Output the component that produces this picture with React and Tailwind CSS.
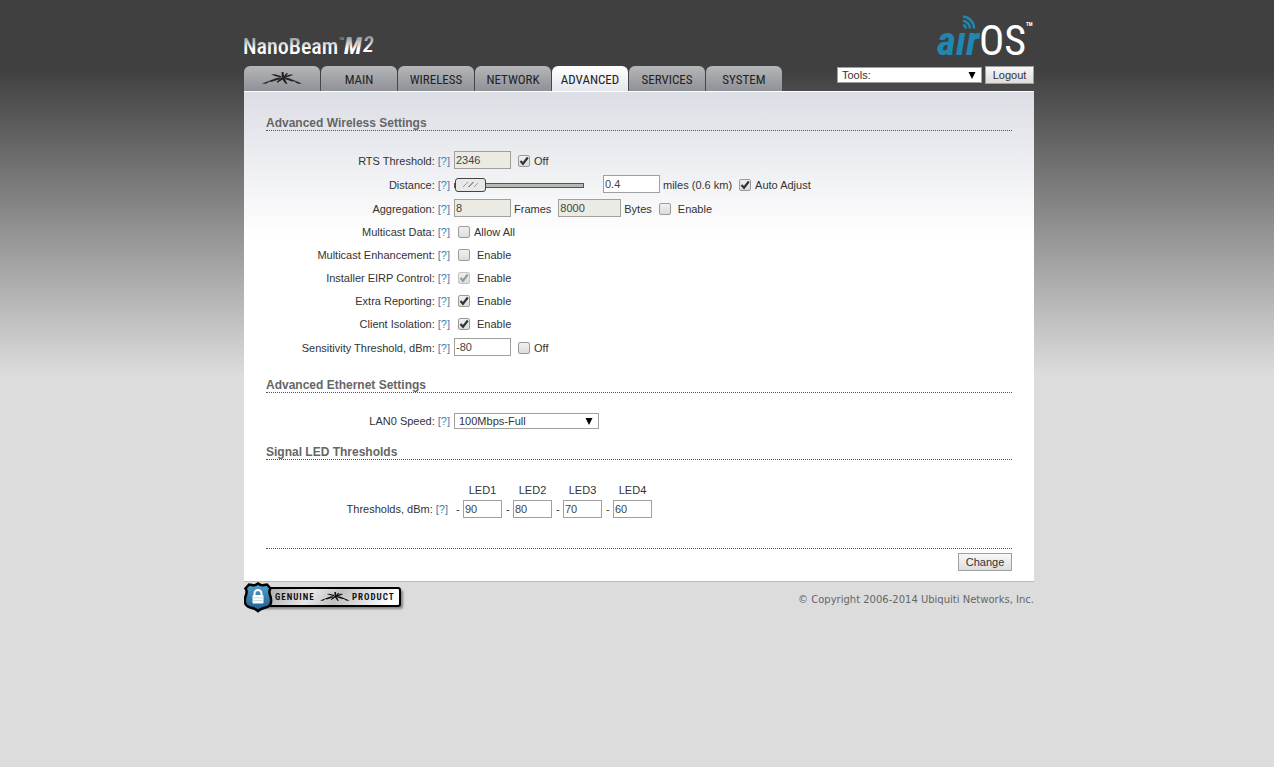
import { useState } from "react";
import clsx from "clsx";

const tabs = ["MAIN", "WIRELESS", "NETWORK", "ADVANCED", "SERVICES", "SYSTEM"];

const leds = [
  { name: "LED1", value: "90" },
  { name: "LED2", value: "80" },
  { name: "LED3", value: "70" },
  { name: "LED4", value: "60" },
];

const narrow = "font-['Roboto_Condensed','Liberation_Sans',sans-serif]";

function Antenna() {
  return (
    <g fill="currentColor">
      <path d="M0 11.500 L14 6.200 L17.500 5.600 L18.500 7 L9 10 L7.500 9.600 L4 11.700 Z" />
      <path d="M40 11.500 L27 6.200 L22.500 5.400 L22 6.800 L30 9.600 L32 9.300 L36 11.700 Z" />
      <path d="M9 2.600 L13 2.200 L19.500 4.200 L19 5.800 L13 4 Z" />
      <path d="M31.500 2.800 L28 2.400 L22 4.600 L22.500 6 L27 4.600 Z" />
      <path d="M19.500 0 L21.500 0 L22 4 L24.500 1 L26 1.600 L22.500 6 L19.800 5 Z" />
      <path d="M20 5 L22 5.500 L25.500 12 L23.200 11.600 L20.500 7.500 L15.500 10.800 L14.500 10 Z" />
    </g>
  );
}

function BrandLogo() {
  return (
    <svg viewBox="0 0 136 32" className="h-8 w-[136px]" role="img" aria-label="NanoBeam M2">
      <defs>
        <linearGradient id="silver" gradientUnits="userSpaceOnUse" x1="0" y1="6" x2="0" y2="24">
          <stop offset="0" stopColor="#8f8f8f" />
          <stop offset="0.7" stopColor="#ffffff" />
        </linearGradient>
      </defs>
      <g className={narrow} fill="url(#silver)">
        <text x="-1" y="24" fontSize="22" fontWeight="500">NanoBeam</text>
        <text x="95" y="10" fontSize="4">TM</text>
        <text x="100" y="24" fontSize="24" fontWeight="bold" fontStyle="italic">M</text>
        <text x="119" y="22" fontSize="22" fontWeight="500" fontStyle="italic">2</text>
      </g>
    </svg>
  );
}

function AirOsLogo() {
  return (
    <svg viewBox="0 0 98 66" className="h-[66px] w-[98px]" role="img" aria-label="airOS">
      <g className={narrow}>
        <text x="1" y="55" fontSize="41" fontWeight="bold" fontStyle="italic" fill="#1f87b0">aır</text>
        <text x="43" y="55" fontSize="42" fill="#ffffff">OS</text>
        <text x="90" y="26" fontSize="5" fontWeight="bold" fill="#ffffff">TM</text>
      </g>
      <g fill="none" stroke="#1f87b0" strokeWidth="2.500">
        <path d="M27 16.500 A12 12 0 0 1 38 28.500" />
        <path d="M27 20.700 A8 8 0 0 1 34 28.500" />
        <path d="M27 25 A4 4 0 0 1 30 28.500" />
      </g>
    </svg>
  );
}

function GenuineBadge() {
  return (
    <svg viewBox="0 0 162 32" className="h-8 w-[162px]" role="img" aria-label="Genuine Product">
      <defs>
        <linearGradient id="plate" x1="0" y1="0" x2="1" y2="0.1">
          <stop offset="0" stopColor="#a0a0a0" />
          <stop offset="0.4" stopColor="#e8e8e8" />
          <stop offset="0.6" stopColor="#c0c0c0" />
          <stop offset="1" stopColor="#ffffff" />
        </linearGradient>
        <linearGradient id="shield" x1="0" y1="0" x2="0" y2="1">
          <stop offset="0" stopColor="#5aa2cc" />
          <stop offset="1" stopColor="#16608f" />
        </linearGradient>
        <filter id="soft" x="-10%" y="-30%" width="120%" height="160%">
          <feGaussianBlur stdDeviation="1.200" />
        </filter>
      </defs>
      <rect x="17" y="8" width="142" height="19" rx="3" fill="#000000" opacity="0.4" filter="url(#soft)" />
      <rect x="15" y="6" width="141" height="18" rx="2" fill="url(#plate)" stroke="#000000" strokeWidth="2" />
      <path
        d="M14 1.500 Q17 4 20 3 L23 2.500 L26.500 6.500 Q24.500 9 26 13 Q28 18 26.500 22 Q25 25 20 26 Q16 27 14 29 Q12 27 8 26 Q3 25 1.500 22 Q0 18 2 13 Q3.500 9 1.500 6.500 L5 2.500 L8 3 Q11 4 14 1.500 Z"
        fill="url(#shield)"
        stroke="#000000"
        strokeWidth="2.500"
      />
      <path d="M10.500 14 V11.500 A3.500 3.500 0 0 1 17.500 11.500 V14" fill="none" stroke="#ffffff" strokeWidth="2" />
      <rect x="8.500" y="13" width="11" height="8.500" rx="1" fill="#ffffff" />
      <path d="M8.500 15.800 H19.500 M8.500 18.600 H19.500" stroke="#b4d2e4" strokeWidth="0.800" />
      <g className={clsx(narrow, "tracking-[1px]")} fontSize="9" fontWeight="bold" fill="#111111">
        <text x="31" y="18">GENUINE</text>
        <text x="108" y="18">PRODUCT</text>
      </g>
      <g transform="translate(76 10) scale(0.74)" className="text-[#111111]">
        <Antenna />
      </g>
    </svg>
  );
}

function Checkbox({ id, label, defaultChecked = false, disabled = false, labelClass = "ml-[7px]", className }) {
  return (
    <div className={clsx("flex items-center", className)}>
      <span className="grid size-3 place-items-center">
        <input
          id={id}
          type="checkbox"
          defaultChecked={defaultChecked}
          disabled={disabled}
          className="peer col-start-1 row-start-1 size-3 appearance-none rounded-[2px] border border-[#9a9a9a] bg-linear-to-b from-[#f0f0f0] to-[#dcdcdc] disabled:border-[#c4c4c4]"
        />
        <svg
          viewBox="0 0 12 12"
          className="pointer-events-none col-start-1 row-start-1 hidden size-3 text-[#333333] peer-checked:block peer-disabled:text-[#999999]"
          fill="none"
          stroke="currentColor"
          strokeWidth="2.200"
        >
          <path d="M2.500 6 L5 8.700 L9.800 2.500" />
        </svg>
      </span>
      <label htmlFor={id} className={labelClass}>{label}</label>
    </div>
  );
}

function TextInput({ className, ...props }) {
  return (
    <input
      type="text"
      className={clsx("h-[18px] border border-[#a0a0a0] bg-white px-px text-[11px] text-[#444444] disabled:bg-[#ebebe4]", className)}
      {...props}
    />
  );
}

function Select({ children, ...props }) {
  return (
    <span className="grid w-[145px] items-center">
      <select
        className="col-start-1 row-start-1 h-4 w-full appearance-none border border-[#a0a0a0] bg-white pl-1 text-[11px] leading-[14px] text-[#333333]"
        {...props}
      >
        {children}
      </select>
      <svg viewBox="0 0 8 7" className="pointer-events-none col-start-1 row-start-1 mr-1.5 h-[7px] w-2 justify-self-end" fill="#000000">
        <path d="M0.500 0 H7.500 L4 7 Z" />
      </svg>
    </span>
  );
}

function Button({ children, className }) {
  return (
    <button
      type="button"
      className={clsx("h-[18px] border border-[#a0a0a0] bg-linear-to-b from-[#f8f8f8] to-[#dddddd] text-[11px] leading-4 text-[#333333]", className)}
    >
      {children}
    </button>
  );
}

function Heading({ children, className }) {
  return (
    <h2 className={clsx("border-b border-dotted border-[#555555] text-xs leading-[14px] font-bold text-[#666666]", className)}>
      {children}
    </h2>
  );
}

function Row({ label, htmlFor, height = "h-[23px]", children }) {
  return (
    <div className={clsx("flex items-center", height)}>
      <div className="mr-1 flex w-[184px] shrink-0 justify-end gap-[3px]">
        <label htmlFor={htmlFor}>{label}</label>
        <a href="#help" className="text-[#3f7fae]">[?]</a>
      </div>
      {children}
    </div>
  );
}

export default function App() {
  const [active, setActive] = useState("ADVANCED");

  return (
    <div className="min-h-screen bg-[#dcdcdc] bg-[linear-gradient(#404040_0px,#404040_70px,#dcdcdc_375px)] pl-1 font-['Liberation_Sans',Arial,sans-serif] text-[11px] leading-[14px] text-[#333333]">
      <div className="mx-auto w-full max-w-[790px]">
        <header>
          <div className="flex h-[66px] items-end justify-between">
            <div className="pb-1"><BrandLogo /></div>
            <AirOsLogo />
          </div>
          <div className="flex justify-between">
            <nav className="flex gap-px">
              <a href="#ubnt" aria-label="Ubiquiti" className="flex h-[25px] w-[76px] items-center justify-center rounded-t-md bg-linear-to-b from-[#b4b6ba] to-[#8f9196] text-[#222222]">
                <svg viewBox="0 0 40 13" className="h-[13px] w-10" aria-hidden="true">
                  <Antenna />
                </svg>
              </a>
              {tabs.map((tab) => (
                <a
                  key={tab}
                  href={`#${tab.toLowerCase()}`}
                  onClick={() => setActive(tab)}
                  className={clsx(
                    "flex h-[25px] w-[76px] items-center justify-center rounded-t-md bg-linear-to-b pt-0.5 text-[13px] text-[#222222]",
                    narrow,
                    tab === active ? "from-white to-[#e4e6eb]" : "from-[#b4b6ba] to-[#8f9196]"
                  )}
                >
                  {tab}
                </a>
              ))}
            </nav>
            <div className="flex h-[18px] items-center gap-[3px]">
              <Select aria-label="Tools" defaultValue="tools">
                <option value="tools">Tools:</option>
              </Select>
              <Button className="w-[49px]">Logout</Button>
            </div>
          </div>
        </header>

        <main className="border-t border-b border-t-white border-b-[#bbbbbb] bg-white bg-[linear-gradient(#dcdee5_0px,#ffffff_145px)] px-[22px] pt-6 pb-2.5">
          <Heading>Advanced Wireless Settings</Heading>
          <div className="mt-[18px]">
            <Row label="RTS Threshold:" htmlFor="rts" height="h-6">
              <TextInput id="rts" defaultValue="2346" disabled className="mb-0.5 w-[57px]" />
              <Checkbox id="rts-off" label="Off" defaultChecked className="ml-[7px]" labelClass="ml-1" />
            </Row>
            <Row label="Distance:" htmlFor="distance" height="h-6">
              <input
                type="range"
                aria-label="Distance"
                min="0"
                max="100"
                defaultValue="0"
                className="h-4 w-[130px] appearance-none bg-transparent [&::-webkit-slider-runnable-track]:h-[5px] [&::-webkit-slider-runnable-track]:border [&::-webkit-slider-runnable-track]:border-[#555555] [&::-webkit-slider-runnable-track]:bg-[#b4bab4] [&::-webkit-slider-thumb]:-mt-[6px] [&::-webkit-slider-thumb]:h-[14px] [&::-webkit-slider-thumb]:w-[31px] [&::-webkit-slider-thumb]:appearance-none [&::-webkit-slider-thumb]:rounded-[3px] [&::-webkit-slider-thumb]:border [&::-webkit-slider-thumb]:border-[#444444] [&::-webkit-slider-thumb]:bg-[#e8e8e8] [&::-webkit-slider-thumb]:bg-[repeating-linear-gradient(135deg,#e8e8e8_0px,#e8e8e8_3px,#999999_3px,#999999_4px)] [&::-webkit-slider-thumb]:bg-[size:15px_5px] [&::-webkit-slider-thumb]:bg-center [&::-webkit-slider-thumb]:bg-no-repeat"
              />
              <TextInput id="distance" defaultValue="0.4" className="mb-0.5 ml-[19px] w-[57px]" />
              <span className="ml-[3px]">miles (0.6 km)</span>
              <Checkbox id="auto-adjust" label="Auto Adjust" defaultChecked className="ml-[7px]" labelClass="ml-1" />
            </Row>
            <Row label="Aggregation:" htmlFor="frames">
              <TextInput id="frames" defaultValue="8" disabled className="mb-0.5 w-[57px]" />
              <label htmlFor="frames" className="ml-[3px]">Frames</label>
              <TextInput id="bytes" defaultValue="8000" disabled className="mb-0.5 ml-[7px] w-[63px]" />
              <label htmlFor="bytes" className="ml-[3px]">Bytes</label>
              <Checkbox id="aggregation" label="Enable" className="ml-[7px]" />
            </Row>
            <Row label="Multicast Data:" htmlFor="multicast">
              <Checkbox id="multicast" label="Allow All" className="ml-1" labelClass="ml-1" />
            </Row>
            <Row label="Multicast Enhancement:" htmlFor="enhancement">
              <Checkbox id="enhancement" label="Enable" className="ml-1" />
            </Row>
            <Row label="Installer EIRP Control:" htmlFor="eirp">
              <Checkbox id="eirp" label="Enable" defaultChecked disabled className="ml-1" />
            </Row>
            <Row label="Extra Reporting:" htmlFor="reporting">
              <Checkbox id="reporting" label="Enable" defaultChecked className="ml-1" />
            </Row>
            <Row label="Client Isolation:" htmlFor="isolation">
              <Checkbox id="isolation" label="Enable" defaultChecked className="ml-1" />
            </Row>
            <Row label="Sensitivity Threshold, dBm:" htmlFor="sensitivity" height="h-[25px]">
              <TextInput id="sensitivity" defaultValue="-80" className="mb-0.5 w-[57px]" />
              <Checkbox id="sensitivity-off" label="Off" className="ml-[7px]" labelClass="ml-1" />
            </Row>
          </div>

          <Heading className="mt-[18px]">Advanced Ethernet Settings</Heading>
          <div className="mt-4">
            <Row label="LAN0 Speed:" htmlFor="lan-speed" height="h-6">
              <Select id="lan-speed" defaultValue="full">
                <option value="full">100Mbps-Full</option>
              </Select>
            </Row>
          </div>

          <Heading className="mt-3">Signal LED Thresholds</Heading>
          <div className="mt-[23px] flex items-end">
            <div className="mr-2 flex w-[182px] shrink-0 justify-end gap-[3px] pb-0.5">
              <span>Thresholds, dBm:</span>
              <a href="#help" className="text-[#3f7fae]">[?]</a>
            </div>
            {leds.map((led) => (
              <div key={led.name} className="grid w-[50px] grid-cols-[7px_39px] items-center gap-y-[3px]">
                <label htmlFor={led.name} className="col-start-2 text-center">{led.name}</label>
                <span className="col-start-1">-</span>
                <TextInput id={led.name} defaultValue={led.value} className="w-full" />
              </div>
            ))}
          </div>

          <div className="mt-[30px] flex justify-end border-t border-dotted border-[#555555] pt-1">
            <Button className="w-[54px]">Change</Button>
          </div>
        </main>

        <footer className="flex items-start justify-between">
          <GenuineBadge />
          <p className="mt-[11px] font-['DejaVu_Sans',Verdana,sans-serif] text-[10px] text-[#666666]">
            © Copyright 2006-2014 Ubiquiti Networks, Inc.
          </p>
        </footer>
      </div>
    </div>
  );
}
